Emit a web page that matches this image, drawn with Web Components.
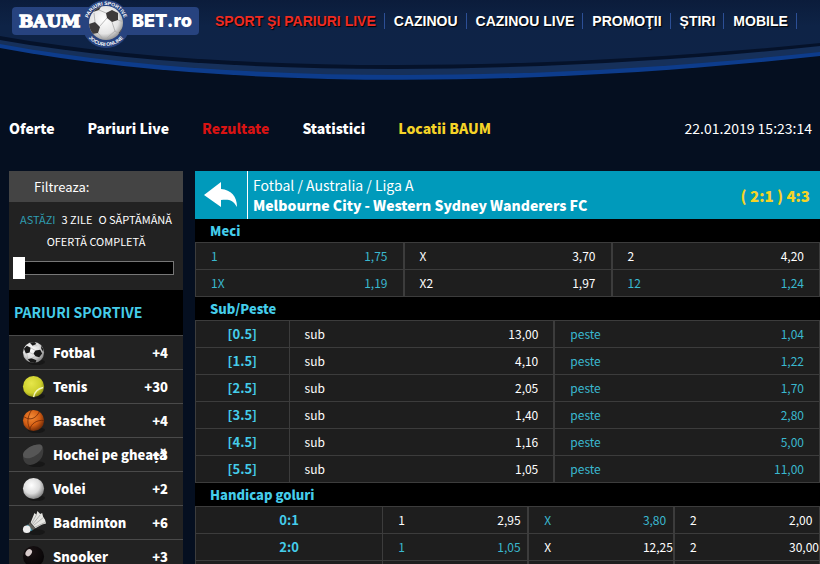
<!DOCTYPE html>
<html lang="ro">
<head>
<meta charset="utf-8">
<meta name="viewport" content="width=device-width, initial-scale=1">
<title>Baumbet.ro - Fotbal</title>
<style>
    :root {
        --page: #050f20;
        --cell: #1e1e1e;
        --line: #3c3c3c;
        --accent: #45cdea;
        --odd: #3ab8cf;
        --yellow: #f5d327;
        --red: #d81313;
        --ui-font: "Noto Sans CJK SC", "Noto Sans", sans-serif;
    }
    body {
        margin: 0;
        background: var(--page);
        color: #fff;
        font: 13px/20px var(--ui-font);
    }
</style>
</head>
<body>
<bet-page>
    <site-header slot="header"></site-header>
    <section-nav slot="nav"></section-nav>
    <side-bar slot="side"></side-bar>
    <match-header slot="main" league="Fotbal / Australia / Liga A" score="( 2:1 ) 4:3">Melbourne City - Western Sydney Wanderers FC</match-header>
    <odds-table slot="main" id="meci">Meci</odds-table>
    <odds-table slot="main" id="sub-peste">Sub/Peste</odds-table>
    <odds-table slot="main" id="handicap" narrow>Handicap goluri</odds-table>
</bet-page>

<script>
class BetPage extends HTMLElement {
    constructor() {
        super();
        this.attachShadow({ mode: 'open' }).innerHTML = `
            <style>
                :host {
                    display: flex;
                    flex-direction: column;
                    height: 100vh;
                    overflow: hidden;
                }
                header, .nav { flex: none; }
                .columns {
                    display: flex;
                    gap: 12px;
                    align-items: flex-start;
                    padding-left: 9px;
                }
                aside { flex: none; width: 174px; }
                main { flex: 1; min-width: 0; }
            </style>
            <header><slot name="header"></slot></header>
            <div class="nav"><slot name="nav"></slot></div>
            <div class="columns">
                <aside><slot name="side"></slot></aside>
                <main><slot name="main"></slot></main>
            </div>
        `;
    }
}

class SiteLogo extends HTMLElement {
    constructor() {
        super();
        this.attachShadow({ mode: 'open' }).innerHTML = `
            <style>
                :host { display: block; }
                a, svg { display: block; }
            </style>
            <a href="#" aria-label="Baumbet.ro">
                <svg width="188" height="50" viewBox="0 0 188 50">
                    <defs>
                        <radialGradient id="ball" cx="45%" cy="40%" r="60%">
                            <stop offset="0" stop-color="#fff"/>
                            <stop offset=".7" stop-color="#e4e4e4"/>
                            <stop offset="1" stop-color="#999"/>
                        </radialGradient>
                        <clipPath id="clip"><circle cx="94" cy="23" r="17"/></clipPath>
                        <path id="top" d="M75 24 a19 19 0 0 1 38 0"/>
                        <path id="bottom" d="M71 23 a23 23 0 0 0 46 0"/>
                    </defs>
                    <rect x="0" y="7" width="187" height="28" rx="4" fill="#27437f"/>
                    <circle cx="94" cy="24" r="24" fill="#27437f"/>
                    <circle cx="94" cy="23" r="17" fill="url(#ball)"/>
                    <g clip-path="url(#clip)" fill="#3d3a3a">
                        <path d="M94 13 l6-3 6 3 0 7 -6 2 -5-4z"/>
                        <path d="M77 24 l6-2 5 5 -2 6 -6 1 -4-4z"/>
                        <path d="M83 6 l7-1 -3 5 -6 2z"/>
                        <path d="M106 34 l5-7 2 5 -6 6z"/>
                        <path d="M94 13 l-7-3 M95 18 l-7 8 M100 22 l3 9 -8 7 M106 20 l6 2 M86 33 l5 6 M83 22 l-1-9 M103 31 l4 3" fill="none" stroke="#aaa" stroke-width=".8"/>
                    </g>
                    <text x="7" y="27" fill="#fff" stroke="#fff" stroke-width="1.300" font-family="DejaVu Serif, serif" font-weight="700" font-size="17">BAUM</text>
                    <text x="120" y="27" fill="#fff" font-family="Inter, sans-serif" font-weight="900" font-size="18">BET.ro</text>
                    <g fill="#fff" font-family="Liberation Sans, sans-serif" font-weight="700" font-size="5" text-anchor="middle">
                        <text><textPath href="#top" startOffset="50%">PARIURI SPORTIVE</textPath></text>
                        <text><textPath href="#bottom" startOffset="50%">JOCURI ONLINE</textPath></text>
                    </g>
                </svg>
            </a>
        `;
    }
}

class SiteHeader extends HTMLElement {
    constructor() {
        super();
        this.attachShadow({ mode: 'open' }).innerHTML = `
            <style>
                :host { display: grid; height: 84px; }
                .curve, .bar { grid-area: 1 / 1; }
                .curve { width: 100%; height: 84px; }
                .bar {
                    display: flex;
                    align-items: flex-start;
                    gap: 6px;
                    padding-left: 12px;
                    z-index: 1;
                }
                ul {
                    display: flex;
                    list-style: none;
                    margin: 0;
                    padding: 13px 0 0;
                }
                li {
                    padding: 0 8px 0 9px;
                    border-right: 1px solid #2c4f96;
                }
                a {
                    display: block;
                    color: #fff;
                    font: bold 14px/16px "Liberation Sans", sans-serif;
                    text-decoration: none;
                    text-shadow: 1px 1px 1px #000;
                    white-space: nowrap;
                }
                a.active { color: #ee2b24; }
            </style>
            <svg class="curve" viewBox="0 0 820 84" preserveAspectRatio="none" aria-hidden="true">
                <defs>
                    <linearGradient id="sky" x2="0" y2="1">
                        <stop offset="0" stop-color="#0b1c3b"/>
                        <stop offset=".4" stop-color="#0e2346"/>
                        <stop offset="1" stop-color="#0e2347"/>
                    </linearGradient>
                </defs>
                <path d="M0 0 H820 V56 C560 85 240 93 0 48z" fill="#0d3c8c"/>
                <path d="M0 0 H820 V52 C560 80 240 88 0 44z" fill="#16305a"/>
                <path d="M0 0 H820 V46 C560 73 240 82 0 40z" fill="#05122a"/>
                <path d="M0 0 H820 V43 C560 69 240 78 0 36z" fill="url(#sky)"/>
            </svg>
            <div class="bar">
                <site-logo></site-logo>
                <nav>
                    <ul>
                        <li><a href="#" class="active">SPORT ŞI PARIURI LIVE</a></li>
                        <li><a href="#">CAZINOU</a></li>
                        <li><a href="#">CAZINOU LIVE</a></li>
                        <li><a href="#">PROMOŢII</a></li>
                        <li><a href="#">ȘTIRI</a></li>
                        <li><a href="#">MOBILE</a></li>
                    </ul>
                </nav>
            </div>
        `;
    }
}

class SectionNav extends HTMLElement {
    constructor() {
        super();
        this.attachShadow({ mode: 'open' }).innerHTML = `
            <style>
                :host {
                    display: flex;
                    justify-content: space-between;
                    padding: 34px 8px 33px 9px;
                    white-space: nowrap;
                }
                nav { display: flex; gap: 33px; }
                a { color: #fff; font-size: 14px; font-weight: 900; text-decoration: none; }
                a.red { color: var(--red); }
                a.yellow { color: var(--yellow); }
                time { font-size: 14px; }
            </style>
            <nav>
                <a href="#">Oferte</a>
                <a href="#">Pariuri Live</a>
                <a href="#" class="red">Rezultate</a>
                <a href="#">Statistici</a>
                <a href="#" class="yellow">Locatii BAUM</a>
            </nav>
            <time datetime="2019-01-22T15:23:14">22.01.2019 15:23:14</time>
        `;
    }
}

class SportIcon extends HTMLElement {
    connectedCallback() {
        const shapes = {
            football: `
                <circle cx="12" cy="12" r="11" fill="url(#white)"/>
                <path d="M14 10 l5-1 2 4 -3 4 -4-1 -2-3z M2 8 l3-3 4 2 -1 5 -4 1z M8 1.500 l5-.5 2 2 -4 2z M6 19 l4-1 5 2 -1 3 -5-.5z M20 5 l2 3 0 3 -2-3z" fill="#191919"/>
                <path d="M9 7 l5 3 M8 12 l4 2 M5 13 l1 6 M14 16 l-4 2 M11 5 l5 0" stroke="#aaa" stroke-width=".6" fill="none"/>`,
            tennis: `
                <circle cx="12" cy="12" r="11" fill="url(#yellow)"/>
                <path d="M22 13 C17 14 13 18 12 23" stroke="#f4f6b8" stroke-width="1.500" fill="none"/>`,
            basketball: `
                <circle cx="12" cy="12" r="11" fill="url(#orange)"/>
                <path d="M2 8 C9 13 15 9 18 3 M8 22 C9 15 16 11 23 12 M10 1 C5 9 5 16 9 22" stroke="#6a2606" stroke-width=".8" fill="none"/>`,
            puck: `
                <path d="M1 13 C1 7 14 0 20 2 C23 3 23 12 20 16 C15 23 8 24 5 22 C2 20 1 17 1 13z" fill="#3d3d3d"/>
                <path d="M1 12 C2 6 14 0 20 2 C24 5 17 13 10 15 C5 17 1 16 1 12z" fill="#565656"/>`,
            volleyball: `<circle cx="12" cy="12" r="11" fill="url(#white)"/>`,
            shuttlecock: `
                <path d="M9 12 L13 2 15 4 16 0 19 3 21 2 22 6 24 9 25 13 21 14 14 18z" fill="#e6e6e2"/>
                <path d="M10 13 L15 4 M11 14 L19 4 M12 15 L22 7 M13 17 L24 12" stroke="#999" stroke-width=".7"/>
                <path d="M8 12 l6 6 -3 2 -5-5z" fill="#5f5f5a"/>
                <path d="M6 14 l5 6 -2 1 -5-5z" fill="#3d94ac"/>
                <circle cx="5" cy="19" r="4" fill="#eee"/>`,
            snooker: `
                <circle cx="12" cy="12" r="11" fill="url(#black)"/>
                <ellipse cx="7" cy="8" rx="3" ry="4" transform="rotate(35 7 8)" fill="#d8cccc"/>`
        };
        this.attachShadow({ mode: 'open' }).innerHTML = `
            <style>
                :host { display: block; width: 24px; height: 24px; }
                svg { display: block; overflow: visible; }
            </style>
            <svg width="24" height="24" viewBox="0 0 25 25" aria-hidden="true">
                <defs>
                    <radialGradient id="white" cx="40%" cy="35%" r="65%">
                        <stop offset="0" stop-color="#fff"/><stop offset=".6" stop-color="#ddd"/><stop offset="1" stop-color="#888"/>
                    </radialGradient>
                    <radialGradient id="yellow" cx="40%" cy="35%" r="65%">
                        <stop offset="0" stop-color="#e6e64a"/><stop offset=".7" stop-color="#cdcf2c"/><stop offset="1" stop-color="#8f9216"/>
                    </radialGradient>
                    <radialGradient id="orange" cx="40%" cy="35%" r="65%">
                        <stop offset="0" stop-color="#f28a35"/><stop offset=".6" stop-color="#d55f14"/><stop offset="1" stop-color="#7a2f08"/>
                    </radialGradient>
                    <radialGradient id="black" cx="40%" cy="30%" r="70%">
                        <stop offset="0" stop-color="#1a1214"/><stop offset="1" stop-color="#070506"/>
                    </radialGradient>
                </defs>
                <ellipse cx="15" cy="22" rx="9" ry="3" fill="#111" opacity=".6"/>
                ${shapes[this.getAttribute('name')]}
            </svg>
        `;
    }
}

class SideBar extends HTMLElement {
    constructor() {
        super();
        const sports = [
            ['football', 'Fotbal', 4],
            ['tennis', 'Tenis', 30],
            ['basketball', 'Baschet', 4],
            ['puck', 'Hochei pe gheaţă', 3],
            ['volleyball', 'Volei', 2],
            ['shuttlecock', 'Badminton', 6],
            ['snooker', 'Snooker', 3]
        ];
        this.attachShadow({ mode: 'open' }).innerHTML = `
            <style>
                :host { display: block; background: #222; }
                label {
                    display: block;
                    padding-left: 25px;
                    background: #444;
                    line-height: 31px;
                }
                .filter { padding: 6px 4px 12px; }
                .days {
                    display: flex;
                    flex-wrap: wrap;
                    justify-content: center;
                    column-gap: 6px;
                    padding-bottom: 6px;
                }
                button {
                    padding: 0;
                    border: 0;
                    background: none;
                    color: #fff;
                    font: 11px/22px var(--ui-font);
                }
                button.active { color: #2f9db0; }
                input {
                    appearance: none;
                    box-sizing: border-box;
                    display: block;
                    width: 161px;
                    height: 14px;
                    margin: 3px 0;
                    border: 1px solid #777;
                    background: #000;
                }
                input::-webkit-slider-thumb {
                    appearance: none;
                    width: 12px;
                    height: 22px;
                    margin-left: -1px;
                    background: #fff;
                }
                h2 {
                    margin: 0;
                    padding-left: 5px;
                    background: #000;
                    color: var(--accent);
                    font-size: 14px;
                    line-height: 45px;
                }
                ul { list-style: none; margin: 0; padding: 0; }
                li { border-top: 1px solid #4a4a4a; }
                li a {
                    display: flex;
                    align-items: center;
                    height: 33px;
                    padding: 0 15px 0 13px;
                    color: #fff;
                    font-weight: 900;
                    text-decoration: none;
                    white-space: nowrap;
                }
                sport-icon { flex: none; margin-right: 7px; }
                .name { flex: 1; min-width: 0; }
            </style>
            <label for="period">Filtreaza:</label>
            <div class="filter">
                <div class="days">
                    <button class="active">ASTĂZI</button>
                    <button>3 ZILE</button>
                    <button>O SĂPTĂMÂNĂ</button>
                    <button>OFERTĂ COMPLETĂ</button>
                </div>
                <input type="range" id="period" min="0" max="3" value="0">
            </div>
            <h2>PARIURI SPORTIVE</h2>
            <ul>
                ${sports.map(([icon, name, count]) => `
                    <li><a href="#"><sport-icon name="${icon}"></sport-icon><span class="name">${name}</span><span>+${count}</span></a></li>
                `).join('')}
            </ul>
        `;
    }
}

class MatchHeader extends HTMLElement {
    connectedCallback() {
        this.attachShadow({ mode: 'open' }).innerHTML = `
            <style>
                :host {
                    display: flex;
                    align-items: stretch;
                    height: 48px;
                    background: #009abb;
                    white-space: nowrap;
                }
                button {
                    flex: none;
                    display: grid;
                    place-items: center;
                    width: 53px;
                    padding: 0;
                    border: 0;
                    border-right: 1px solid #fff;
                    background: none;
                }
                .title { flex: 1; min-width: 0; padding: 4px 0 0 5px; font-size: 14px; }
                h1 { margin: 0; font-size: 14px; font-weight: 900; line-height: 20px; }
                .score {
                    align-self: center;
                    padding: 2px 10px 0 0;
                    color: var(--yellow);
                    font-size: 15px;
                    font-weight: 900;
                }
            </style>
            <button aria-label="Inapoi">
                <svg width="34" height="26" viewBox="0 0 34 26" fill="#fff">
                    <path d="M0 13 L17 0 V7 C27 8 33 14 33 25 C29 18 25 17 17 18 V25z"/>
                </svg>
            </button>
            <div class="title">
                ${this.getAttribute('league')}
                <h1><slot></slot></h1>
            </div>
            <div class="score">${this.getAttribute('score')}</div>
        `;
    }
}

// A row is [label or null, ...[outcome, price, highlighted]]
const MARKETS = {
    'meci': {
        rows: [
            [null, ['1', '1,75', true], ['X', '3,70'], ['2', '4,20']],
            [null, ['1X', '1,19', true], ['X2', '1,97'], ['12', '1,24', true]]
        ]
    },
    'sub-peste': {
        labelWidth: '15%',
        rows: [
            ['[0.5]', ['sub', '13,00'], ['peste', '1,04', true]],
            ['[1.5]', ['sub', '4,10'], ['peste', '1,22', true]],
            ['[2.5]', ['sub', '2,05'], ['peste', '1,70', true]],
            ['[3.5]', ['sub', '1,40'], ['peste', '2,80', true]],
            ['[4.5]', ['sub', '1,16'], ['peste', '5,00', true]],
            ['[5.5]', ['sub', '1,05'], ['peste', '11,00', true]]
        ]
    },
    'handicap': {
        labelWidth: '30%',
        rows: [
            ['0:1', ['1', '2,95'], ['X', '3,80', true], ['2', '2,00']],
            ['2:0', ['1', '1,05', true], ['X', '12,25'], ['2', '30,00']],
            ['', ['', ''], ['', ''], ['', '']]
        ]
    }
};

class OddsTable extends HTMLElement {
    connectedCallback() {
        const { labelWidth, rows } = MARKETS[this.id];
        this.attachShadow({ mode: 'open' }).innerHTML = `
            <style>
                :host { display: block; background: #000; }
                h2 {
                    margin: 0;
                    padding-left: 15px;
                    color: var(--accent);
                    font-size: 13px;
                    font-weight: 900;
                    line-height: 23px;
                }
                table {
                    width: 100%;
                    table-layout: fixed;
                    border-collapse: collapse;
                    background: var(--cell);
                }
                th, td {
                    height: 26px;
                    padding: 0;
                    border: 1px solid var(--line);
                }
                td + td { border-left-width: 2px; }
                th { color: var(--accent); font-weight: 700; }
                .odd {
                    display: flex;
                    justify-content: space-between;
                    padding: 0 15px;
                    font-size: 12px;
                }
                .odd.on { color: var(--odd); }
                :host([narrow]) .odd { padding-right: 6px; }
                :host([narrow]) .price { width: 24px; }
            </style>
            <h2><slot></slot></h2>
            <table>
                ${labelWidth ? `<colgroup><col style="width: ${labelWidth}"></colgroup>` : ''}
                <tbody>
                    ${rows.map(([label, ...odds]) => `
                        <tr>
                            ${label === null ? '' : `<th scope="row">${label}</th>`}
                            ${odds.map(([name, price, on]) => `
                                <td><div class="odd${on ? ' on' : ''}"><span>${name}</span><span class="price">${price}</span></div></td>
                            `).join('')}
                        </tr>
                    `).join('')}
                </tbody>
            </table>
        `;
    }
}

customElements.define('sport-icon', SportIcon);
customElements.define('site-logo', SiteLogo);
customElements.define('site-header', SiteHeader);
customElements.define('section-nav', SectionNav);
customElements.define('side-bar', SideBar);
customElements.define('match-header', MatchHeader);
customElements.define('odds-table', OddsTable);
customElements.define('bet-page', BetPage);
</script>
</body>
</html>
